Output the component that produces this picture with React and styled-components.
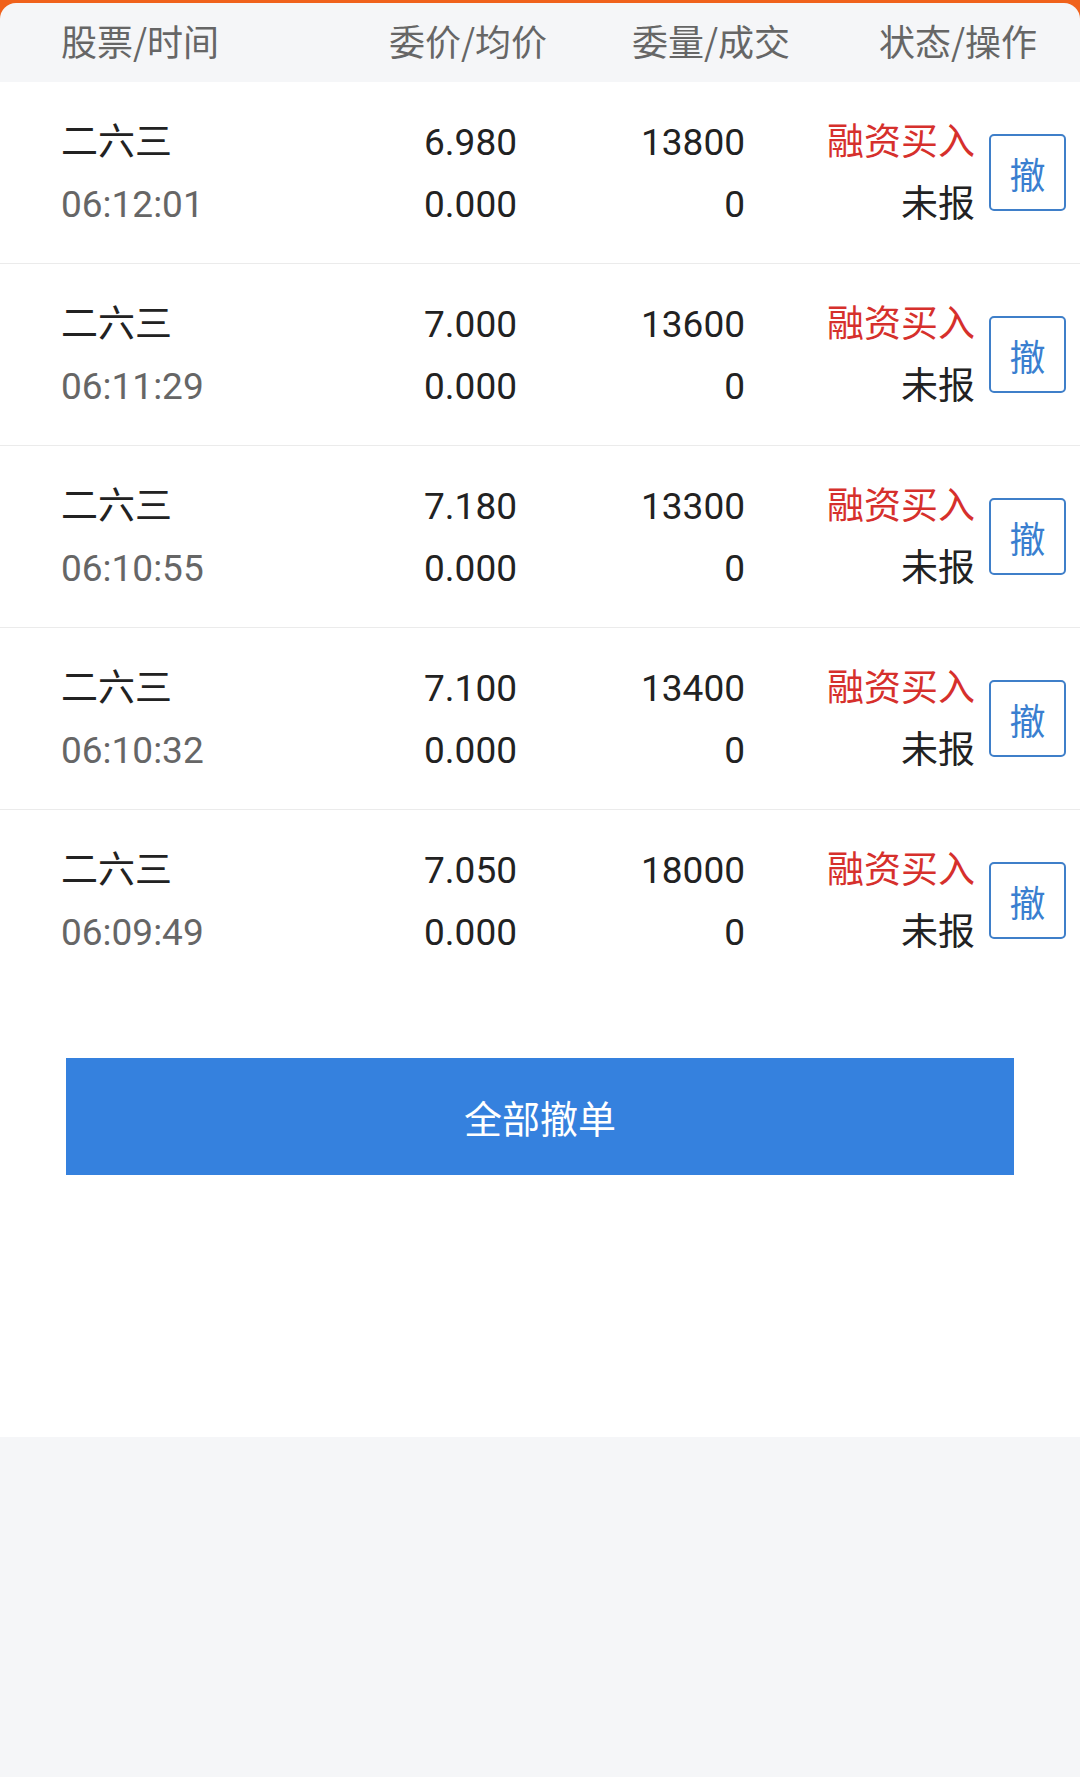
import React from 'react';
import styled, { createGlobalStyle } from 'styled-components';

const orders = [
  { price: '6.980', qty: '13800', time: '06:12:01' },
  { price: '7.000', qty: '13600', time: '06:11:29' },
  { price: '7.180', qty: '13300', time: '06:10:55' },
  { price: '7.100', qty: '13400', time: '06:10:32' },
  { price: '7.050', qty: '18000', time: '06:09:49' },
];

const App = () => {
  return (
    <Page>
      <GlobalStyle />
      <Top>
        <Header>
          <HeadCell>股票/时间</HeadCell>
          <HeadCell>委价/均价</HeadCell>
          <HeadCell>委量/成交</HeadCell>
          <HeadCell>状态/操作</HeadCell>
        </Header>
      </Top>
      <Panel>
        {orders.map((o, i) => (
          <Row key={o.time} last={i === orders.length - 1}>
            <Cell>
              <Line>二六三</Line>
              <Line muted>{o.time}</Line>
            </Cell>
            <Cell right>
              <Line>{o.price}</Line>
              <Line>0.000</Line>
            </Cell>
            <Cell right>
              <Line>{o.qty}</Line>
              <Line>0</Line>
            </Cell>
            <Cell right>
              <Line red>融资买入</Line>
              <Line>未报</Line>
            </Cell>
            <CancelButton>撤</CancelButton>
          </Row>
        ))}
        <Footer>
          <CancelAll>全部撤单</CancelAll>
        </Footer>
      </Panel>
    </Page>
  );
};

export default App;

const GlobalStyle = createGlobalStyle`
  body {
    margin: 0;
    background: #f5f6f8;
    font-family: Roboto, "Noto Sans CJK SC", sans-serif;
  }
`;
const Page = styled.div`
  width: 1080px;
  min-height: 1777px;
  background: #f5f6f8;
`;
const Top = styled.div`
  background: #f0621c;
  padding-top: 3px;
`;
const Header = styled.div`
  display: grid;
  grid-template-columns: 328px 243px 247px auto;
  align-items: center;
  height: 79px;
  box-sizing: border-box;
  padding: 0 0 6px 61px;
  background: #f5f6f8;
  border-radius: 16px 16px 0 0;
`;
const HeadCell = styled.div`
  font-family: "Noto Sans CJK SC", sans-serif;
  font-size: 36px;
  color: #666;
  white-space: nowrap;
`;
const Panel = styled.div`
  background: #fff;
  height: 1355px;
`;
const Row = styled.div`
  display: grid;
  grid-template-columns: 200px 256px 228px 230px 77px;
  align-items: center;
  height: 181px;
  padding: 0 14px 0 61px;
  border-bottom: ${(p) => (p.last ? 'none' : '1px solid #ebebeb')};
  & > button {
    margin-left: 14px;
  }
`;
const Cell = styled.div`
  display: flex;
  flex-direction: column;
  align-items: ${(p) => (p.right ? 'flex-end' : 'flex-start')};
  padding-top: 3px;
`;
const Line = styled.div`
  font-size: 37px;
  line-height: 62px;
  white-space: nowrap;
  color: ${(p) => (p.red ? '#d6302c' : p.muted ? '#666' : '#222')};
`;
const CancelButton = styled.button`
  width: 77px;
  height: 77px;
  padding: 0;
  border: 2px solid #3f7fc9;
  border-radius: 5px;
  background: #fff;
  color: #3a7fd0;
  font-family: "Noto Sans CJK SC", sans-serif;
  font-size: 36px;
`;
const Footer = styled.div`
  padding: 67px 66px 0;
`;
const CancelAll = styled.button`
  display: block;
  width: 100%;
  height: 117px;
  border: none;
  background: #3581de;
  color: #fff;
  font-family: "Noto Sans CJK SC", sans-serif;
  font-size: 38px;
`;
